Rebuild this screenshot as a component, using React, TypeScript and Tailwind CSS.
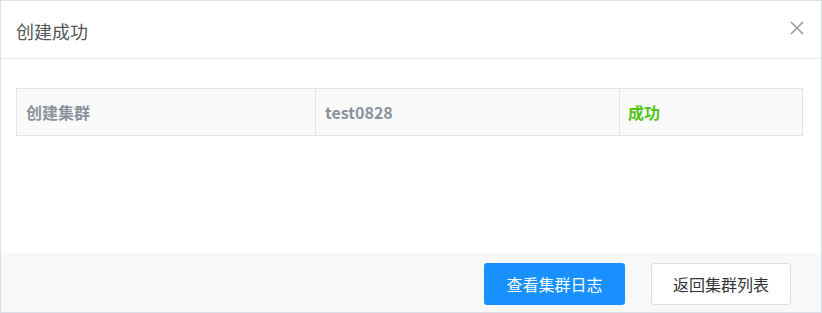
const font = { fontFamily: '"Noto Sans CJK SC", "Noto Sans", sans-serif' }

export default function App() {
  return (
    <div className="w-[822px] h-[313px] bg-white" style={font}>
      <div className="flex flex-col h-full border border-[#dcdfe6]">
        {/* Header */}
        <div className="h-[58px] flex items-center justify-between pl-[15px] pr-[17px] border-b border-[#e4e7ed]">
          <span className="text-[18px] text-[#555] pt-[4px]">创建成功</span>
          <svg className="w-[14px] h-[14px] mt-[-4px]" viewBox="0 0 14 14" fill="none" stroke="#9a9a9a" strokeWidth={1.6}>
            <path d="M1 1L13 13M13 1L1 13" />
          </svg>
        </div>

        {/* Body */}
        <div className="h-[194px] pl-[15px] pr-[18px] pt-[29px]">
          <div className="flex h-[48px] border border-[#e1e5eb] bg-[#fafafa] text-[16px] font-bold">
            <div className="w-[299px] flex items-center pl-[9px] border-r border-[#e1e5eb] text-[#8a929e]">创建集群</div>
            <div className="w-[304px] flex items-center pl-[9px] border-r border-[#e1e5eb] text-[#8a929e]">test0828</div>
            <div className="flex-1 flex items-center pl-[8px] text-[#52c41a]">成功</div>
          </div>
        </div>

        {/* Footer */}
        <div className="flex-1 bg-[#f8f8f8] flex justify-end items-start pt-[10px] pr-[30px] gap-[26px]">
          <button className="w-[141px] h-[42px] rounded-[3px] bg-[#1890ff] text-white text-[16px]">查看集群日志</button>
          <button className="w-[140px] h-[42px] rounded-[3px] bg-white border border-[#dcdfe6] text-[#333] text-[16px]">返回集群列表</button>
        </div>
      </div>
    </div>
  )
}
